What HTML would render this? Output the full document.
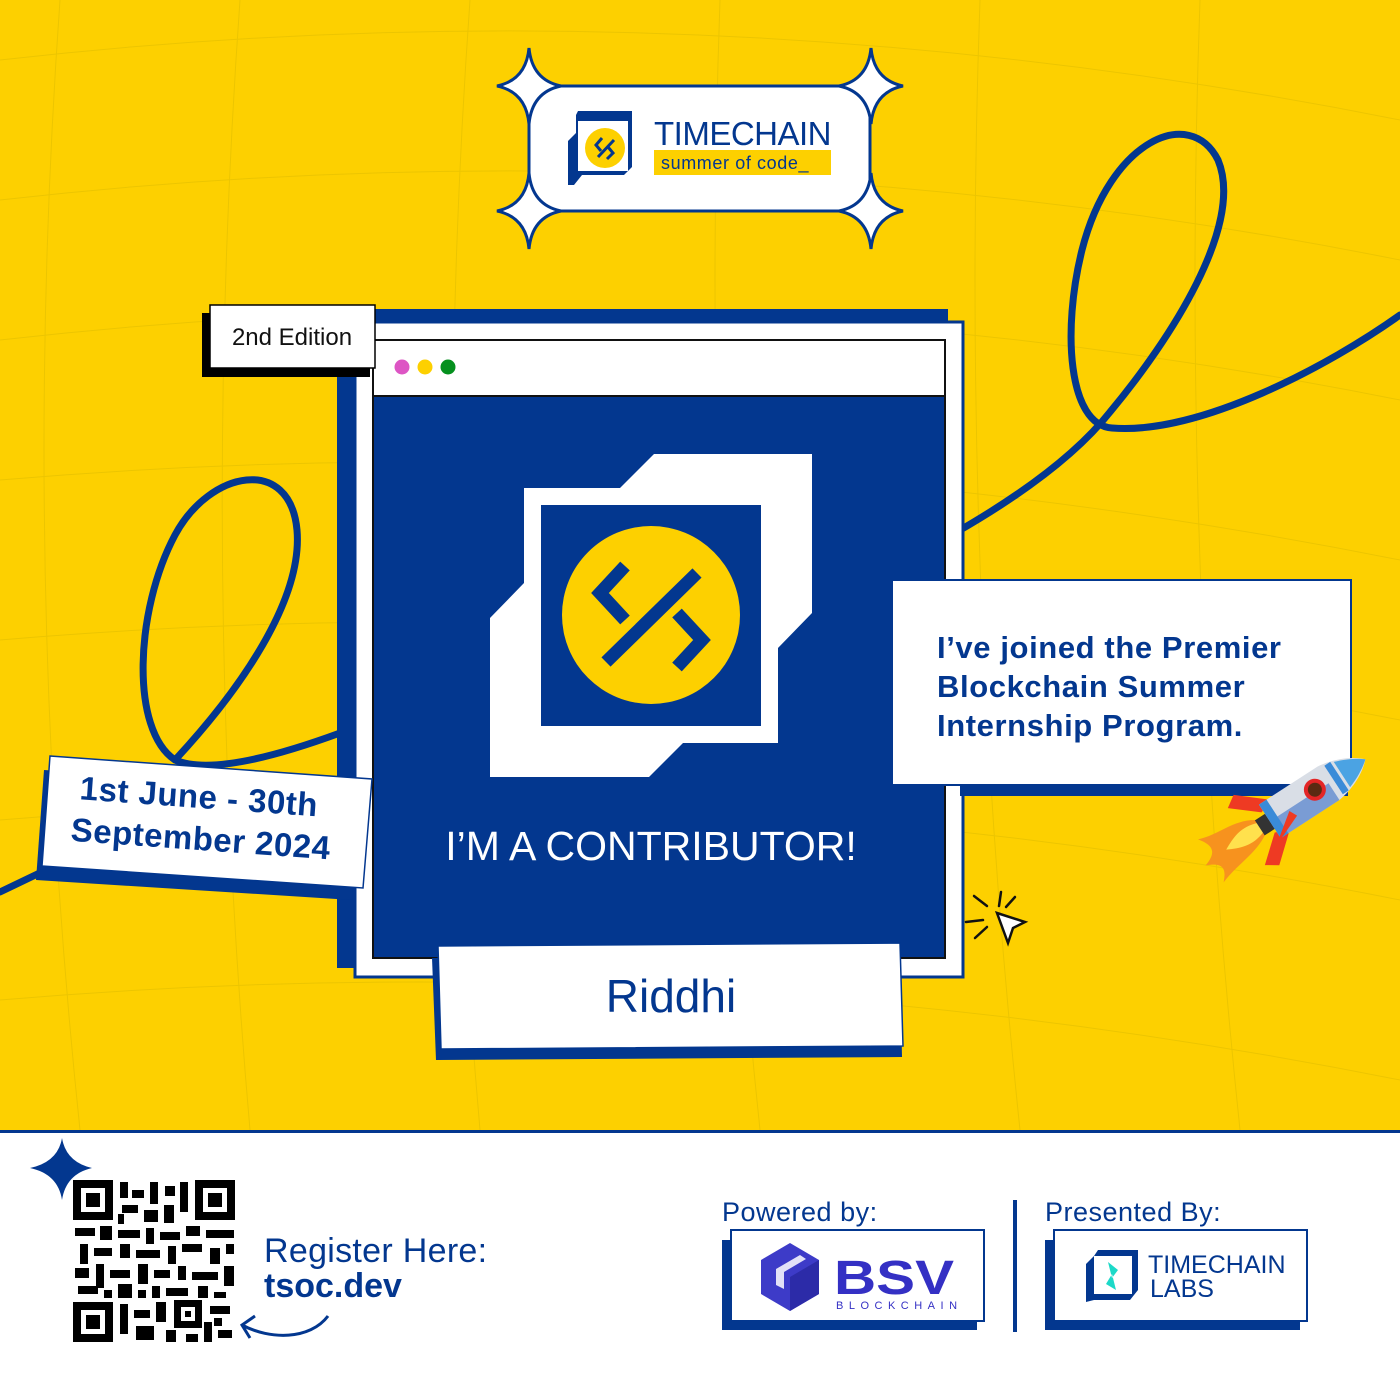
<!DOCTYPE html>
<html><head><meta charset="utf-8"><style>
html,body{margin:0;padding:0}
body{width:1400px;height:1400px;overflow:hidden;font-family:"Liberation Sans",sans-serif}
svg{display:block}
</style></head><body>
<svg width="1400" height="1400" viewBox="0 0 1400 1400" xmlns="http://www.w3.org/2000/svg" font-family="Liberation Sans, sans-serif">
<rect width="1400" height="1130" fill="#FDD000"/>
<!-- faint grid -->
<g stroke="#D9B800" stroke-width="1" fill="none" opacity="0.45">
<path d="M0,60 Q700,-20 1400,120"/><path d="M0,200 Q700,120 1400,260"/><path d="M0,340 Q700,260 1400,400"/>
<path d="M0,480 Q700,420 1400,560"/><path d="M0,640 Q700,580 1400,720"/><path d="M0,820 Q700,760 1400,900"/>
<path d="M0,1000 Q700,940 1400,1080"/>
<path d="M60,0 Q20,560 80,1130"/><path d="M240,0 Q200,560 250,1130"/><path d="M470,0 Q430,560 480,1130"/>
<path d="M720,0 Q700,560 760,1130"/><path d="M980,0 Q960,560 1020,1130"/><path d="M1200,0 Q1180,560 1240,1130"/>
</g>
<rect y="1130" width="1400" height="270" fill="#fff"/>
<rect y="1130" width="1400" height="3" fill="#03378F"/>

<!-- curves -->
<g fill="none" stroke="#03378F" stroke-width="7" stroke-linecap="round">
<path d="M340,733 C280,755 210,775 175,760 C130,730 135,610 175,535 C210,470 290,455 297,530 C303,600 240,690 175,760"/>
<path d="M0,892 L50,868"/>
<path d="M955,533 C1030,490 1080,450 1110,412 C1170,340 1245,225 1218,160 C1190,105 1110,140 1082,250 C1062,330 1068,425 1112,428 C1200,435 1330,365 1400,315"/>
</g>

<!-- header -->
<rect x="529" y="86" width="341" height="125" rx="22" fill="#fff" stroke="#03378F" stroke-width="3"/>
<g fill="#fff" stroke="#03378F" stroke-width="3">
<path id="st" d="M0,-38 Q3,-6 32,0 Q3,6 0,38 Q-3,6 -32,0 Q-3,-6 0,-38Z" transform="translate(529,86)"/>
<use href="#st" transform="translate(342,0)"/>
<use href="#st" transform="translate(0,125)"/>
<use href="#st" transform="translate(342,125)"/>
</g>
<g transform="translate(568,111)">
<path d="M10,0 L64,0 L64,56 L56,64 L14,64 L6,74 L0,74 L0,30 L8,22 L8,4Z" fill="#03378F"/>
<rect x="10" y="10" width="50" height="50" fill="#fff"/>
<circle cx="37" cy="37" r="20" fill="#FDD000"/>
<path d="M34,27 L28,34 L33,40 M46,29 L30,46 M40,36 L45,42 L39,48" stroke="#03378F" stroke-width="3" fill="none"/>
</g>
<text x="654" y="145" font-size="33" fill="#03378F" letter-spacing="-0.5">TIMECHAIN</text>
<rect x="654" y="150" width="177" height="25" fill="#FDD000"/>
<text x="661" y="169" font-size="18" fill="#03378F" letter-spacing="0.6">summer of code_</text>

<!-- window -->
<rect x="337" y="309" width="611" height="659" fill="#03378F"/>
<rect x="355" y="322" width="608" height="655" fill="#fff" stroke="#03378F" stroke-width="3"/>
<rect x="373" y="340" width="572" height="618" fill="#03378F" stroke="#111" stroke-width="2"/>
<rect x="373" y="340" width="572" height="56" fill="#fff" stroke="#111" stroke-width="2"/>
<circle cx="402" cy="367" r="7.5" fill="#DD55C4"/>
<circle cx="425" cy="367" r="7.5" fill="#FDD000"/>
<circle cx="448" cy="367" r="7.5" fill="#05901E"/>
<path d="M654,454 L812,454 L812,613 L778,648 L778,743 L683,743 L649,777 L490,777 L490,618 L524,583 L524,488 L620,488Z" fill="#fff"/>
<rect x="541" y="505" width="220" height="221" fill="#03378F"/>
<ellipse cx="651" cy="615" rx="89" ry="89" fill="#FDD000"/>
<g stroke="#03378F" stroke-width="13" fill="none" stroke-linecap="butt">
<path d="M625,566 L600,593 L625,620"/>
<path d="M697,573 L606,662"/>
<path d="M677,613 L702,640 L677,667"/>
</g>
<text x="651" y="860" font-size="41" fill="#fff" text-anchor="middle">I’M A CONTRIBUTOR!</text>

<!-- 2nd edition -->
<rect x="202" y="313" width="168" height="64" fill="#000"/>
<rect x="210" y="305" width="165" height="63" fill="#fff" stroke="#000" stroke-width="1.5"/>
<text x="292" y="345" font-size="24" fill="#111" text-anchor="middle">2nd Edition</text>

<!-- date -->
<path d="M44,770 L360,790 L352,900 L36,880Z" fill="#03378F"/>
<path d="M50,756 L372,779 L363,888 L42,866Z" fill="#fff" stroke="#03378F" stroke-width="1.5"/>
<g transform="rotate(4.1 200 820)" fill="#03378F" font-weight="bold" font-size="33">
<text x="78" y="808" letter-spacing="0.5">1st June - 30th</text>
<text x="72" y="850" letter-spacing="0.5">September 2024</text>
</g>

<!-- name -->
<path d="M432,958 L900,956 L902,1057 L436,1060Z" fill="#03378F"/>
<path d="M438,946 L900,943 L903,1046 L441,1049Z" fill="#fff" stroke="#03378F" stroke-width="1.5"/>
<text x="671" y="1012" font-size="46" fill="#03378F" text-anchor="middle">Riddhi</text>

<!-- right box -->
<rect x="960" y="780" width="388" height="16" fill="#03378F"/>
<rect x="892" y="580" width="459" height="205" fill="#fff" stroke="#03378F" stroke-width="2"/>
<g fill="#03378F" font-weight="bold" font-size="31" letter-spacing="0.6">
<text x="937" y="658">I’ve joined the Premier</text>
<text x="937" y="697">Blockchain Summer</text>
<text x="937" y="736">Internship Program.</text>
</g>

<!-- rocket -->
<g transform="translate(1295,805) rotate(-33)">
<path d="M-40,-8 C-60,-22 -80,-16 -100,-24 C-88,-8 -95,-2 -108,2 C-94,8 -90,14 -102,26 C-80,18 -60,20 -40,8Z" fill="#F7921E"/>
<path d="M-40,-5 C-58,-12 -70,-6 -82,0 C-70,6 -58,12 -40,5Z" fill="#FFE14D"/>
<path d="M-18,-18 L-46,-42 L-58,-34 L-32,-12Z" fill="#EE3A23"/>
<path d="M-18,18 L-46,42 L-58,34 L-32,12Z" fill="#EE3A23"/>
<rect x="-42" y="-9" width="14" height="18" fill="#333"/>
<path d="M-30,-20 L40,-20 C62,-17 76,-8 84,0 C76,8 62,17 40,20 L-30,20Z" fill="#D9DEE6"/>
<path d="M-30,0 L40,0 L40,20 L-30,20Z" fill="#3A6FC8" opacity="0.6"/>
<path d="M56,-15 C68,-11 78,-5 84,0 C78,5 68,11 56,15Z" fill="#4BA3E3"/>
<rect x="-30" y="-20" width="9" height="40" fill="#3A8BD8"/>
<rect x="46" y="-17" width="7" height="34" fill="#3A8BD8"/>
<circle cx="25" cy="-2" r="11" fill="#E32526"/><circle cx="25" cy="-2" r="7" fill="#5A2A12"/>
<path d="M-8,2 L-38,24 L-4,10Z" fill="#EE3A23"/>
</g>

<!-- cursor -->
<g stroke="#111" stroke-width="2.5" fill="none" stroke-linecap="round">
<path d="M997,913 L1025,922 L1013,928 L1008,943Z" fill="#fff"/>
<path d="M1001,892 L999,906 M1015,897 L1006,907 M974,896 L987,906 M966,922 L983,920 M975,938 L987,927"/>
</g>

<!-- bottom star -->
<path d="M62,1138 Q66,1162 92,1168 Q66,1174 62,1200 Q58,1174 30,1168 Q58,1162 62,1138Z" fill="#03378F"/>
<!-- QR -->
<g fill="#000">
<rect x="73" y="1180" width="162" height="162" fill="#fff"/>
<path d="M73,1180h40v40h-40z M81,1188v24h24v-24z M86,1193h14v14h-14z" fill-rule="evenodd"/>
<path d="M195,1180h40v40h-40z M203,1188v24h24v-24z M208,1193h14v14h-14z" fill-rule="evenodd"/>
<path d="M73,1302h40v40h-40z M81,1310v24h24v-24z M86,1315h14v14h-14z" fill-rule="evenodd"/>
<g>
<rect x="120" y="1182" width="8" height="16"/><rect x="132" y="1190" width="12" height="8"/><rect x="150" y="1182" width="8" height="22"/><rect x="165" y="1186" width="10" height="10"/><rect x="180" y="1182" width="8" height="30"/>
<rect x="122" y="1205" width="16" height="8"/><rect x="144" y="1210" width="14" height="12"/><rect x="164" y="1205" width="10" height="18"/><rect x="118" y="1214" width="6" height="10"/>
<rect x="75" y="1228" width="20" height="8"/><rect x="100" y="1226" width="12" height="14"/><rect x="118" y="1230" width="22" height="8"/><rect x="146" y="1228" width="8" height="16"/><rect x="160" y="1232" width="20" height="8"/><rect x="186" y="1226" width="14" height="10"/><rect x="206" y="1230" width="28" height="8"/>
<rect x="80" y="1244" width="8" height="20"/><rect x="94" y="1248" width="18" height="8"/><rect x="120" y="1244" width="10" height="14"/><rect x="136" y="1250" width="24" height="8"/><rect x="168" y="1246" width="8" height="18"/><rect x="182" y="1244" width="20" height="8"/><rect x="210" y="1248" width="10" height="16"/><rect x="226" y="1244" width="8" height="10"/>
<rect x="75" y="1268" width="14" height="10"/><rect x="96" y="1264" width="8" height="24"/><rect x="110" y="1270" width="20" height="8"/><rect x="138" y="1264" width="10" height="20"/><rect x="154" y="1270" width="16" height="8"/><rect x="178" y="1266" width="8" height="14"/><rect x="192" y="1272" width="26" height="8"/><rect x="224" y="1266" width="10" height="20"/>
<rect x="78" y="1286" width="20" height="8"/><rect x="104" y="1290" width="8" height="8"/><rect x="118" y="1284" width="14" height="14"/><rect x="138" y="1290" width="8" height="8"/><rect x="152" y="1286" width="8" height="12"/><rect x="166" y="1288" width="22" height="8"/><rect x="198" y="1286" width="10" height="12"/><rect x="214" y="1292" width="12" height="6"/>
<rect x="120" y="1304" width="8" height="30"/><rect x="134" y="1310" width="16" height="8"/><rect x="156" y="1302" width="10" height="20"/><rect x="174" y="1300" width="28" height="28"/><rect x="210" y="1306" width="20" height="8"/><rect x="214" y="1318" width="8" height="8"/>
<rect x="136" y="1326" width="18" height="14"/><rect x="166" y="1330" width="10" height="12"/><rect x="186" y="1334" width="12" height="8"/><rect x="204" y="1322" width="8" height="20"/><rect x="218" y="1330" width="14" height="8"/>
</g>
<rect x="181" y="1307" width="14" height="14" fill="#fff"/><rect x="185" y="1311" width="6" height="6"/>
</g>
<path d="M242,1325 C270,1340 310,1340 328,1316" stroke="#03378F" stroke-width="3" fill="none"/>
<path d="M255,1316 L242,1325 L250,1338" stroke="#03378F" stroke-width="3" fill="none"/>
<text x="264" y="1262" font-size="34" fill="#03378F" letter-spacing="0.3">Register Here:</text>
<text x="264" y="1297" font-size="34" font-weight="bold" fill="#03378F">tsoc.dev</text>

<!-- powered -->
<text x="722" y="1221" font-size="27" fill="#03378F" letter-spacing="0.5">Powered by:</text>
<rect x="722" y="1240" width="255" height="90" fill="#03378F"/>
<rect x="731" y="1230" width="253" height="91" fill="#fff" stroke="#03378F" stroke-width="2"/>
<g transform="translate(790,1277)">
<path d="M0,-34 L29,-17 L29,17 L0,34 L-29,17 L-29,-17Z" fill="#3D3BC8"/>
<path d="M0,0 L29,-17 L29,17 L0,34Z" fill="#2C2BA8"/>
<path d="M-14,-8 L10,-22 L16,-18 L-6,-5 L-6,12 L-14,8Z" fill="#fff" opacity="0.85"/>
</g>
<text x="834" y="1294" font-size="48" font-weight="bold" fill="#3430C4" textLength="120" lengthAdjust="spacingAndGlyphs">BSV</text>
<text x="836" y="1309" font-size="11" fill="#3430C4" letter-spacing="5.5">BLOCKCHAIN</text>
<rect x="1013" y="1200" width="4" height="132" fill="#03378F"/>
<!-- presented -->
<text x="1045" y="1221" font-size="27" fill="#03378F" letter-spacing="0.5">Presented By:</text>
<rect x="1045" y="1240" width="255" height="90" fill="#03378F"/>
<rect x="1054" y="1230" width="253" height="91" fill="#fff" stroke="#03378F" stroke-width="2"/>
<g transform="translate(1086,1250)">
<path d="M12,0 L52,0 L52,40 L44,50 L8,50 L0,52 L0,14 L8,6Z" fill="#03378F"/>
<rect x="8" y="6" width="38" height="38" fill="#fff"/>
<path d="M22,12 L32,20 L26,28Z M26,24 L20,34 L30,40Z" fill="#1CD9C8"/>
</g>
<text x="1148" y="1273" font-size="25" fill="#03378F">TIMECHAIN</text>
<text x="1150" y="1297" font-size="25" fill="#03378F">LABS</text>
</svg>
</body></html>
